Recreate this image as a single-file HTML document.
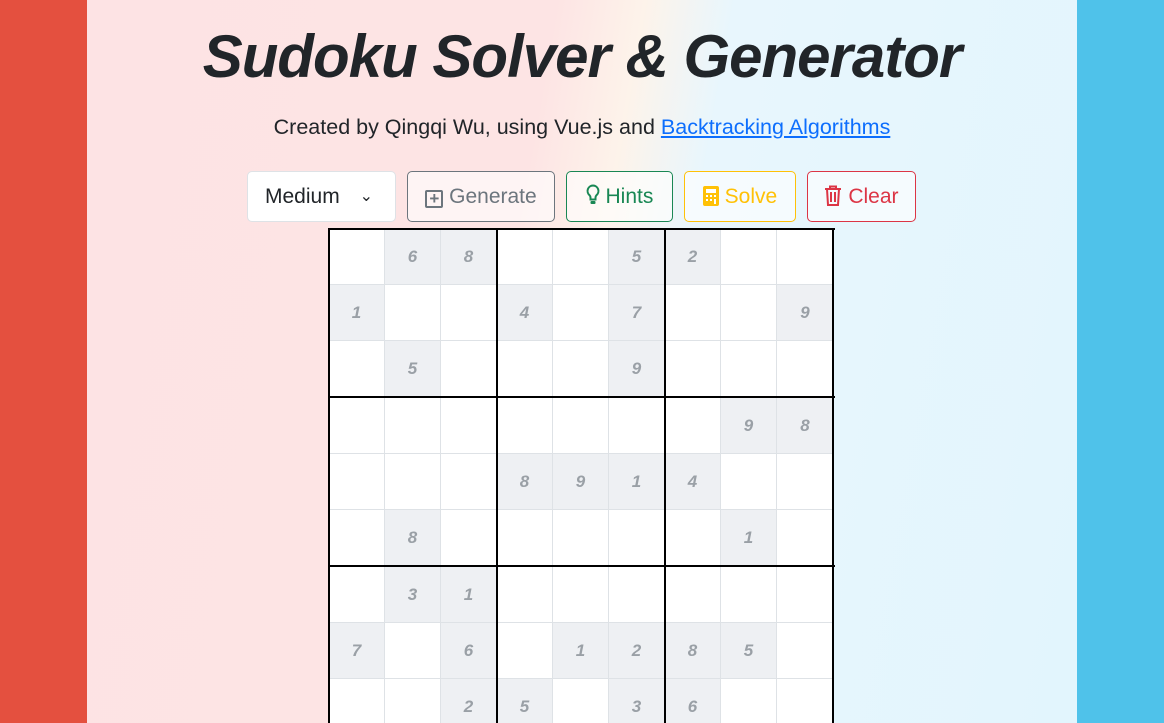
<!DOCTYPE html>
<html><head><meta charset="utf-8"><style>
*{box-sizing:border-box;margin:0;padding:0}
html,body{width:1164px;height:723px;overflow:hidden}
body{position:relative;font-family:"Liberation Sans",sans-serif;background:#4cc3ea}
.bgL{position:absolute;left:0;top:0;width:87px;height:723px;background:#e4503f}
.bgR{position:absolute;left:1077px;top:0;width:87px;height:723px;background:#4fc2ea}
.cont{position:absolute;left:87px;top:0;width:990px;height:723px;background:linear-gradient(100deg,#fde3e4 0%,#fde4e4 42%,#fdf3ea 50%,#e8f6fd 58%,#e2f5fd 100%)}
h1{position:absolute;left:0;top:22px;width:1164px;text-align:center;font:italic bold 60px "Liberation Sans",sans-serif;color:#212529;letter-spacing:-1px}
.sub{position:absolute;left:0;top:115px;width:1164px;text-align:center;font-size:21.5px;color:#212529}
.sub a{color:#0d6efd}
.btn{position:absolute;top:171px;height:51px;border:1px solid;border-radius:5px;font-size:21px;line-height:49px;text-align:center;background:rgba(255,255,255,.6)}
.cell{position:absolute;border-right:1px solid #dee2e6;border-bottom:1px solid #dee2e6;background:#fff;font:italic bold 17px "Liberation Sans",sans-serif;color:#9aa0a6;text-align:center}
.cell.c{background:#eef0f3}
</style></head><body>
<div class="bgL"></div><div class="bgR"></div><div class="cont"></div>
<h1>Sudoku Solver &amp; Generator</h1>
<div class="sub">Created by Qingqi Wu, using Vue.js and <a href="#">Backtracking Algorithms</a></div>
<div class="btn" style="left:247px;width:149px;border-color:#dee2e6;background:#fff;color:#212529;text-align:left;padding-left:17px">Medium <span style="position:absolute;right:22px;font-size:16px">&#8964;</span></div>
<div class="btn" style="left:407px;width:148px;border-color:#6c757d;color:#6c757d"><span style="display:inline-block;width:18px;height:18px;border:2px solid #6c757d;border-radius:2px;font-size:17px;line-height:13px;vertical-align:-1px;font-weight:bold">+</span> Generate</div>
<div class="btn" style="left:566px;width:107px;border-color:#198754;color:#198754"><svg width="14" height="22" viewBox="0 0 14 22" style="vertical-align:-3px"><path d="M7 1.5a5.5 5.5 0 0 0-3.5 9.7c.6.6 1 1.5 1 2.5v1.8h5v-1.8c0-1 .4-1.9 1-2.5A5.5 5.5 0 0 0 7 1.5z" fill="none" stroke="#198754" stroke-width="2"/><rect x="4.5" y="17" width="5" height="3" rx="1" fill="#198754"/></svg> Hints</div>
<div class="btn" style="left:684px;width:112px;border-color:#ffc107;color:#ffc107"><svg width="16" height="20" viewBox="0 0 16 20" style="vertical-align:-3px"><rect x="0" y="0" width="16" height="20" rx="2" fill="#ffc107"/><rect x="3" y="3" width="10" height="4" fill="#fff"/><g fill="#fff"><rect x="3" y="9" width="2" height="2"/><rect x="7" y="9" width="2" height="2"/><rect x="11" y="9" width="2" height="2"/><rect x="3" y="13" width="2" height="2"/><rect x="7" y="13" width="2" height="2"/><rect x="11" y="13" width="2" height="5"/></g></svg> Solve</div>
<div class="btn" style="left:807px;width:109px;border-color:#dc3545;color:#dc3545"><svg width="18" height="21" viewBox="0 0 18 21" style="vertical-align:-3px"><path d="M1 4h16M6 4V1.5h6V4M3 4l1 16h10l1-16M7 7v10M11 7v10" fill="none" stroke="#dc3545" stroke-width="2"/></svg> Clear</div>
<div id="g"></div>
<script>
var d=["_68__52__","1__4_7__9","_5___9___","_______98","___8914__","_8_____1_","_31______","7_6_1285_","__25_36__"];
var h="";
var xs=[0,56,112,168,224,280,336,392,448,505],ys=[0,56,112,168,225,281,337,394,450,506];
for(var r=0;r<9;r++)for(var c=0;c<9;c++){var ch=d[r][c];var hh=ys[r+1]-ys[r];
h+='<div class="cell'+(ch!="_"?" c":"")+'" style="left:'+(329+xs[c])+'px;top:'+(229+ys[r])+'px;width:'+(xs[c+1]-xs[c])+'px;height:'+hh+'px;line-height:'+hh+'px">'+(ch!="_"?ch:"")+'</div>';}
[0,168,336,504].forEach(function(x){h+='<div style="position:absolute;left:'+(328+x)+'px;top:228px;width:2px;height:510px;background:#000"></div>';});
[0,168,337].forEach(function(y){h+='<div style="position:absolute;left:328px;top:'+(228+y)+'px;width:507px;height:2px;background:#000"></div>';});
document.body.insertAdjacentHTML("beforeend",h);
</script>
</body></html>
